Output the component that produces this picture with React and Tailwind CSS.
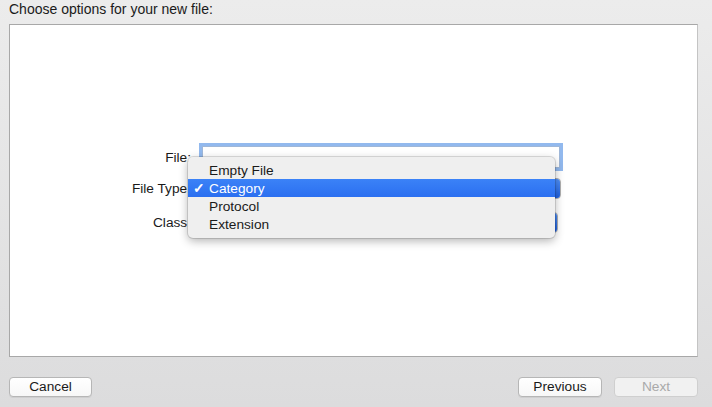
export default function App() {
  const font = { fontFamily: '"Helvetica Neue", "Liberation Sans", Arial, sans-serif' };
  return (
    <div
      className="w-[712px] h-[407px] flex flex-col bg-gradient-to-b from-[#ececec] to-[#dcdcdd] text-[13.7px] text-[#1a1a1a] overflow-hidden"
      style={font}
    >
      <div className="h-[24px] pl-[9px] leading-[19px] text-[14px]">Choose options for your new file:</div>
      <div className="relative ml-[9px] w-[689px] h-[333px] bg-white border border-[#a8a8a8] border-r-[#c4c4c4]">
        <div className="relative pt-[121px] flex flex-col">
          {/* File row */}
          <div className="flex items-center h-[22px]">
            <div className="w-[181px] text-right leading-[23px]">File:</div>
            <div className="ml-[11px] w-[358px] h-[22px] bg-white border border-[#9fb7d8] shadow-[0_0_0_3px_#92b9ee]" />
          </div>
          {/* File type row */}
          <div className="flex items-center h-[21px] mt-[10px]">
            <div className="w-[181px] text-right leading-[21px]">File Type:</div>
            <div className="ml-[8px] w-[362px] h-[21px] flex rounded-[4px] border border-[#b0b0b0] bg-white overflow-hidden">
              <div className="flex-1" />
              <div className="w-[16px] h-full bg-gradient-to-b from-[#4f8ff7] to-[#1d5fe0] flex flex-col items-center justify-center gap-[3px]">
                <div className="w-[2px] h-[2px] bg-white/80 rounded-full" />
                <div className="w-[2px] h-[2px] bg-white/80 rounded-full" />
              </div>
            </div>
          </div>
          {/* Class row */}
          <div className="flex items-center h-[21px] mt-[13px]">
            <div className="w-[181px] text-right leading-[23px]">Class:</div>
            <div className="ml-[8px] w-[359px] h-[21px] flex rounded-[4px] border border-[#b0b0b0] bg-white overflow-hidden">
              <div className="flex-1" />
              <div className="w-[16px] h-full bg-gradient-to-b from-[#4f8ff7] to-[#1d5fe0]" />
            </div>
          </div>

          {/* Popup menu */}
          <div className="absolute left-[178px] top-[132px] w-[367px] h-[81px] rounded-[5px] bg-[#efefef] shadow-[0_3px_10px_rgba(0,0,0,0.3),0_0_0_1px_rgba(0,0,0,0.12)] pt-[4px]">
            <div className="h-[18px] leading-[19px] pl-[21px]">Empty File</div>
            <div className="h-[18px] leading-[19px] pl-[5px] flex bg-gradient-to-b from-[#3b82f7] to-[#2b6ff0] text-white">
              <span className="w-[16px] font-bold">✓</span>
              <span>Category</span>
            </div>
            <div className="h-[18px] leading-[19px] pl-[21px]">Protocol</div>
            <div className="h-[18px] leading-[19px] pl-[21px]">Extension</div>
          </div>
        </div>
      </div>
      <div className="flex mt-[20px] pl-[9px] pr-[14px]">
        <button className="w-[83px] h-[20px] rounded-[4px] border border-[#b6b6b6] bg-gradient-to-b from-white to-[#f7f7f7] leading-[18px] text-[#1a1a1a] shadow-[0_1px_0_rgba(0,0,0,0.06)]">
          Cancel
        </button>
        <div className="flex-1" />
        <button className="w-[84px] h-[20px] rounded-[4px] border border-[#b6b6b6] bg-gradient-to-b from-white to-[#f7f7f7] leading-[18px] text-[#1a1a1a] shadow-[0_1px_0_rgba(0,0,0,0.06)]">
          Previous
        </button>
        <button className="ml-[12px] w-[84px] h-[20px] rounded-[4px] border border-[#cfcfcf] bg-[#f1f1f1] leading-[18px] text-[#a9a9a9]">
          Next
        </button>
      </div>
    </div>
  );
}
